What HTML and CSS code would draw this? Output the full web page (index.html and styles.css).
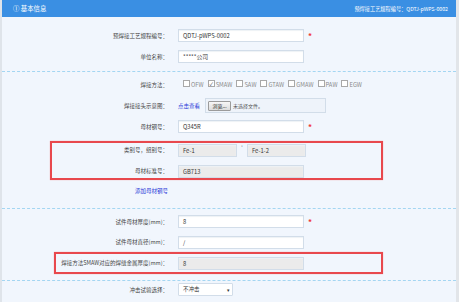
FILE: index.html
```html
<!DOCTYPE html>
<html lang="zh-CN">

<head>
    <meta charset="UTF-8">
    <meta name="viewport" content="width=device-width, initial-scale=1.0">
    <title>基本信息</title>
    <link rel="stylesheet" href="styles.css">
</head>

<body>
    <div class="page">
        <div class="header">
            <span class="title">① 基本信息</span>
            <span class="code">预焊接工艺规程编号：QDTJ-pWPS-0002</span>
        </div>

        <div class="section first">
            <div class="row">
                <span class="label">预焊接工艺规程编号：</span>
                <span class="input">QDTJ-pWPS-0002</span>
                <span class="star">*</span>
            </div>
            <div class="row">
                <span class="label">单位名称：</span>
                <span class="input">*****公司</span>
            </div>
        </div>

        <div class="section second">
            <div class="row">
                <span class="label">焊接方法：</span>
                <div class="checks">
                    <span class="check"><i class="box"></i>OFW</span>
                    <span class="check"><i class="box on">✓</i>SMAW</span>
                    <span class="check"><i class="box"></i>SAW</span>
                    <span class="check"><i class="box"></i>GTAW</span>
                    <span class="check"><i class="box"></i>GMAW</span>
                    <span class="check"><i class="box"></i>PAW</span>
                    <span class="check"><i class="box"></i>EGW</span>
                </div>
            </div>
            <div class="row">
                <span class="label">焊接接头示意图：</span>
                <a class="link">点击查看</a>
                <span class="file">
                    <span class="browse">浏览...</span>
                    <span class="none">未选择文件。</span>
                </span>
            </div>
            <div class="row">
                <span class="label">母材钢号：</span>
                <span class="input">Q345R</span>
                <span class="star">*</span>
            </div>

            <div class="mark mark-a">
                <div class="row small">
                    <span class="label">类别号，组别号：</span>
                    <span class="input gray short">Fe-1</span>
                    <span class="sep">'</span>
                    <span class="input gray short">Fe-1-2</span>
                </div>
                <div class="row small">
                    <span class="label">母材标准号：</span>
                    <span class="input gray">GB713</span>
                </div>
            </div>

            <div class="row">
                <span class="label"><a class="link">添加母材钢号</a></span>
            </div>
        </div>

        <div class="section third">
            <div class="row">
                <span class="label">试件母材厚度(mm)：</span>
                <span class="input">8</span>
                <span class="star">*</span>
            </div>
            <div class="row tight">
                <span class="label">试件母材直径(mm)：</span>
                <span class="input">/</span>
            </div>
            <div class="mark mark-b">
                <div class="row small">
                    <span class="label">焊接方法SMAW对应的焊缝金属厚度(mm)：</span>
                    <span class="input gray">8</span>
                </div>
            </div>
        </div>

        <div class="section fourth">
            <div class="row">
                <span class="label">冲击试验选择：</span>
                <span class="select">不冲击<i class="arrow">▾</i></span>
            </div>
        </div>
    </div>
</body>

</html>
```

FILE: styles.css
```css
body {
    margin: 0;
    font-family: "Noto Sans CJK SC", "Noto Sans", sans-serif;
    color: #444;
    background-color: #f1f6fd;
}

.page {
    width: 454px;
    height: 302px;
    overflow: hidden;
    border-left: 2px solid #dfe4ea;
    border-right: 3px solid #e2e5e9;
    background-color: #f1f6fd;
}

.header {
    height: 17px;
    display: flex;
    align-items: center;
    justify-content: space-between;
    padding: 0 8px 0 11px;
    background-color: #3a8fe3;
    color: #fff;
}

.header .title {
    font-size: 6.4px;
}

.header .code {
    font-size: 5.2px;
}

.section {
    border-top: 1px dashed #a4d6f2;
}

.section.first {
    border-top: none;
    padding: 8px 0 4px;
}

.section.second {
    padding: 2px 0 7px;
}

.section.third {
    padding: 2px 0 6px;
}

.section.fourth {
    padding: 0;
}

.section.fourth .row {
    height: 17px;
}

.row {
    height: 21px;
    display: flex;
    align-items: center;
    font-size: 5.5px;
}

.row.tight {
    height: 20px;
}

.label {
    width: 166px;
    margin-right: 10px;
    text-align: right;
    flex-shrink: 0;
}

.input {
    width: 120px;
    height: 11px;
    line-height: 11px;
    padding-left: 4px;
    border: 1px solid #d2dde9;
    background-color: #fff;
    color: #333;
    font-size: 5.8px;
    box-shadow: inset 0 1px 1px #eef2f6;
}

.input.gray {
    background-color: #ebebeb;
}

.input.short {
    width: 53px;
}

.sep {
    width: 10px;
    text-align: center;
    align-self: flex-start;
    margin-top: 1px;
    font-size: 5px;
}

.star {
    color: #f03535;
    margin-left: 4px;
    font-size: 8px;
    font-weight: bold;
    align-self: flex-start;
    margin-top: 5px;
}

.checks {
    display: flex;
    gap: 4px;
    margin-left: 5px;
    color: #8a8a8a;
    font-size: 5.8px;
}

.check {
    display: flex;
    align-items: center;
}

.box {
    width: 5px;
    height: 5px;
    margin-right: 1px;
    border: 1px solid #a8a8a8;
    background-color: #fff;
    font-style: normal;
    font-size: 5px;
    line-height: 5px;
    text-align: center;
    color: #333;
    margin-top: -2px;
}

.link {
    color: #2a38d8;
    cursor: pointer;
}

.file {
    width: 117px;
    height: 13px;
    margin-left: 5px;
    display: flex;
    align-items: center;
    padding-left: 2px;
    border: 1px solid #d2dde9;
    background-color: #eef3fa;
    font-size: 5px;
    color: #555;
}

.browse {
    width: 21px;
    height: 8px;
    line-height: 8px;
    margin-right: 2px;
    text-align: center;
    border: 1px solid #9b9b9b;
    border-radius: 1px;
    background: linear-gradient(#f7f7f7, #dcdcdc);
    color: #222;
}

.mark {
    border: 2px solid #e8484d;
    box-shadow: 0 0 1px #f3a0a0;
}

.mark-a {
    width: 329px;
    margin: 4px 0 0 48px;
}

.mark-a .label {
    width: 116px;
}

.mark-a .row {
    height: 14px;
}

.mark-a .row + .row {
    margin-top: 7px;
}

.mark-b {
    width: 325px;
    margin-left: 52px;
}

.mark-b .label {
    width: 112px;
}

.mark-b .row {
    height: 18px;
}

.select {
    width: 49px;
    height: 11px;
    line-height: 11px;
    padding-left: 4px;
    display: flex;
    justify-content: space-between;
    border: 1px solid #d2dde9;
    border-radius: 1px;
    background-color: #fff;
    color: #333;
}

.arrow {
    font-style: normal;
    font-size: 5px;
    margin-right: 2px;
}
```
